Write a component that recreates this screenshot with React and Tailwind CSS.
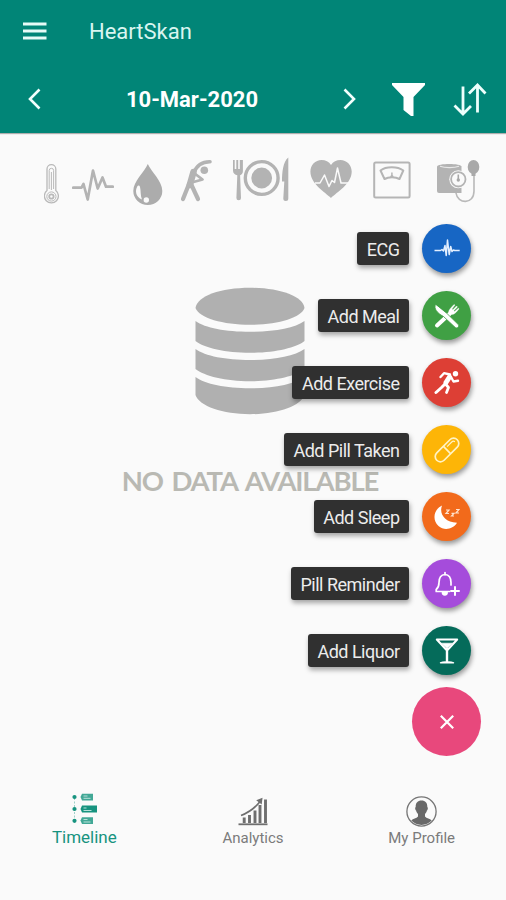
import React, { useState } from 'react';
import clsx from 'clsx';

const ThermometerIcon = () => (
  <svg className="ml-11" width="15" height="50" viewBox="0 0 15 50" fill="none" stroke="#b9b9b9">
    <path d="M3 35.5V14a4.4 4.4 0 0 1 8.8 0v21.5a7 7 0 1 1-8.8 0z" strokeWidth="1.3" />
    <path d="M5.2 34V15.5a2.2 2.2 0 0 1 4.4 0V34" strokeWidth="1" />
    <path d="M7.4 17v18" strokeWidth="1" />
    <circle cx="7.4" cy="41.5" r="4.6" strokeWidth="1" />
    <circle cx="7.4" cy="41.5" r="2.2" strokeWidth="1.8" />
  </svg>
);

const PulseIcon = () => (
  <svg className="ml-[13px]" width="42" height="50" viewBox="0 0 42 50" fill="none" stroke="#b3b3b3" strokeWidth="2.7" strokeLinecap="round" strokeLinejoin="round">
    <path d="M1.2 32.7h8.3l2-3.7 4.2 15.500L21 15.500l4.700 18 4.800-11 3.500 9.200h6.800" />
  </svg>
);

const DropIcon = () => (
  <svg className="ml-[19px]" width="30" height="50" viewBox="0 0 30 50">
    <path d="M14.8 9C18.500 17 29.300 26 29.300 36a14.500 14 0 0 1-29 0C.3 26 11.500 17 14.800 9z" fill="#acacac" />
    <path d="M4.500 31C1.500 36 3 42 9 44.500 7.300 41 8 35.500 7 32c-.5-1.600-1.700-1.900-2.500-1z" fill="#fafafa" />
    <circle cx="13.300" cy="45" r="2.700" fill="#fafafa" />
  </svg>
);

const StretchIcon = () => (
  <svg className="ml-[17px]" width="32" height="50" viewBox="0 0 32 50" fill="none" stroke="#b3b3b3" strokeLinecap="round" strokeLinejoin="round">
    <path d="M30 6.700C22 6.500 16.500 11 13.500 18" strokeWidth="3.600" />
    <path d="M13.500 17L9.800 30" strokeWidth="6.500" />
    <path d="M9 29L3 44" strokeWidth="4.200" />
    <path d="M11.500 30l6.500 14" strokeWidth="4.200" />
    <path d="M14 18l8.500 6.500-9 2.500" strokeWidth="2.800" />
    <circle cx="24.300" cy="15.300" r="3.800" fill="#b3b3b3" stroke="none" />
  </svg>
);

const PlateIcon = () => (
  <svg className="ml-5" width="58" height="50" viewBox="0 0 58 50" fill="#b3b3b3">
    <path d="M1 5h1.700v9h1.600V5h1.900v9h1.600V5h1.900v9V5h1.200v11c0 2.600-1.300 3.600-2.800 4.300l.9 22.700a2.300 2.300 0 0 1-4.600 0l.9-22.700C3 19.600 1 18.500 1 15.500z" />
    <circle cx="29.700" cy="23" r="16.400" fill="none" stroke="#b3b3b3" strokeWidth="3.400" />
    <circle cx="29.700" cy="23" r="10.400" />
    <path d="M56.300 2.500v41a2.500 2.500 0 0 1-5 0l1-17h-2.300c0-9 1-20 6.300-24z" />
  </svg>
);

const HeartRateIcon = () => (
  <svg className="ml-5" width="42" height="50" viewBox="0 0 42 50">
    <path d="M21 43C15 37 .4 29 .4 16.500.4 10 5.400 5 11.500 5c4 0 7.500 1.800 9.500 5 2-3.200 5.500-5 9.500-5 6.100 0 11.200 5 11.200 11.500C41.700 29 27 37 21 43z" fill="#b3b3b3" />
    <path d="M5 28h5l4.500-8 4.500 11.500 3-6 2.500 2 3-14.500 3.500 15H38" fill="none" stroke="#fafafa" strokeWidth="1.500" strokeLinejoin="round" />
  </svg>
);

const ScaleIcon = () => (
  <svg className="ml-[21px]" width="38" height="50" viewBox="0 0 38 50" fill="none" stroke="#b5b5b5">
    <rect x="1.200" y="7.600" width="35.400" height="35" rx="1.500" strokeWidth="2" />
    <path d="M7.500 15.500c5.500-4.300 17-4.300 22.800 0L26.500 24c-4-2.200-11-2.200-15 0z" strokeWidth="2" strokeLinejoin="round" />
    <path d="M18.900 22.500v-5" strokeWidth="1.500" />
    <circle cx="18.900" cy="21.500" r="1.600" fill="#b5b5b5" stroke="none" />
  </svg>
);

const BloodPressureIcon = () => (
  <svg className="ml-[25px]" width="44" height="50" viewBox="0 0 44 50">
    <path d="M1 11.500C1 8 25.500 8 25.500 11.500V38H3a2 2 0 0 1-2-2z" fill="#b3b3b3" />
    <path d="M4 11.300c5 1.700 14 1.700 19 0" fill="none" stroke="#e8e8e8" strokeWidth="1.200" />
    <path d="M20 38c1.500 11 18 12 18-2V19" fill="none" stroke="#b9b9b9" strokeWidth="1.600" />
    <circle cx="22.300" cy="24.300" r="9" fill="#fafafa" />
    <circle cx="22.300" cy="24.300" r="7.200" fill="#fafafa" stroke="#b3b3b3" strokeWidth="1.800" />
    <path d="M22.300 25.500v-6" stroke="#a8a8a8" strokeWidth="1.600" />
    <circle cx="22.300" cy="25" r="1.700" fill="#a8a8a8" />
    <ellipse cx="37.500" cy="12" rx="5.800" ry="7" fill="#a9a9a9" />
    <path d="M35.500 17h4v4h-4z" fill="#a9a9a9" />
  </svg>
);

const DatabaseIcon = () => (
  <svg width="110" height="128" viewBox="0 0 110 128" fill="#b0b0b0">
    <path d="M.5 21C2 9 26 .8 55 .8S108 9 109.500 21C106 31 82 37.800 55 37.800S4 31 .5 21z" />
    <path d="M.5 34C10 41 31 44.800 55 44.800s45-3.800 54.500-10.800v20C101 61 79 65.800 55 65.800S9 61 .5 54z" />
    <path d="M.5 62C10 69 31 73 55 73s45-4 54.500-11v20C101 89 79 94.300 55 94.300S9 89 .5 82z" />
    <path d="M.5 90C10 97 31 101.300 55 101.300s45-4.300 54.500-11.300v18C106 119 82 127.200 55 127.200S4 119 .5 108z" />
  </svg>
);

const EcgIcon = () => (
  <svg width="26" height="26" viewBox="0 0 26 26" fill="none" stroke="#e3efff" strokeWidth="1.500" strokeLinejoin="round">
    <path d="M.5 14.500h6l1.500-1 1.500 1.500L11 9.500l1.200 10L13.500 4l1.700 14.500 1.500-8L18 15.500l1.500-1.500 1.200.5h5" />
  </svg>
);

const MealIcon = () => (
  <svg width="26" height="26" viewBox="0 0 26 26" fill="none" stroke="#fff" strokeLinecap="round">
    <path d="M3 22.500L15.500 11" strokeWidth="4" />
    <path d="M14.500 9.500c0-2.500 2-4.500 5.500-8l1 .5-3 4 .8.800L22.500 3l1 1-3.700 3.700.8.800L24.500 5l.5 1c-3.500 4-5 6-8 5.500z" fill="#fff" strokeWidth=".3" />
    <path d="M1.500 1.500c-2 4 1.500 8.500 8 12l11.800 11c2 1.400 4.300-1 3-2.900L13 10.500z" fill="#fff" stroke="#40a044" strokeWidth=".8" />
  </svg>
);

const RunIcon = () => (
  <svg width="26" height="26" viewBox="0 0 26 26" fill="none" stroke="#fff" strokeLinecap="round" strokeLinejoin="round">
    <circle cx="21.500" cy="3.800" r="2.700" fill="#fff" stroke="none" />
    <path d="M16 4.500l-6-1.300L6.500 7" strokeWidth="2.400" />
    <path d="M15.500 7L12 12.500" strokeWidth="5" />
    <path d="M17 7l2.500 4.500 4.500-.8" strokeWidth="2.400" />
    <path d="M11 14L7.500 17.500 2 22.500" strokeWidth="3" />
    <path d="M11.500 14l3 3.500-2 5" strokeWidth="2.800" />
  </svg>
);

const PillIcon = () => (
  <svg width="28" height="28" viewBox="0 0 28 28" fill="none" stroke="#fff3c4" strokeWidth="1.700">
    <g transform="rotate(-45 14 14)">
      <rect x="-.5" y="8.800" width="29" height="10.400" rx="5.200" />
      <path d="M14 9v10" />
      <path d="M16.500 11.700h6.500a2.500 2.500 0 0 1 2.500 2" strokeWidth="1.200" />
    </g>
  </svg>
);

const SleepIcon = () => (
  <svg width="26" height="26" viewBox="0 0 26 26">
    <path d="M8 1.500C5 9 10 18.500 23 18.800 19 25.500 10 27 4.500 22-2 16-.5 5.500 8 1.500z" fill="#fff" />
    <path d="M12 6h3l-3 3.500h3M17.500 9.300H20L17.500 12H20M22 5.500h3L22 9h3" fill="none" stroke="#ffe3cf" strokeWidth="1.200" />
  </svg>
);

const ReminderIcon = () => (
  <svg width="26" height="26" viewBox="0 0 26 26" fill="none" stroke="#fff" strokeWidth="1.700" strokeLinecap="round" strokeLinejoin="round">
    <path d="M15.500 20.500H2.200v-2c2.300-1.800 2.800-3.500 2.800-7C5 6.500 7.500 3.800 11 3.500c3.500.3 6 3 6 8v2.500" />
    <path d="M11 3.500V1.500" />
    <path d="M8.500 21.500a2.300 2.300 0 0 0 4.600 0z" fill="#fff" />
    <path d="M21 16v8M17 20h8" strokeWidth="2" />
  </svg>
);

const LiquorIcon = () => (
  <svg width="24" height="28" viewBox="0 0 24 28" fill="none" stroke="#fff" strokeWidth="2" strokeLinecap="round" strokeLinejoin="round">
    <path d="M1.800 2.500h20.400L13 12.500h-2z" />
    <path d="M6.500 6.200h11L12.500 11h-1z" fill="#fff" strokeWidth=".6" />
    <path d="M12 12v12" strokeWidth="2.400" />
    <path d="M5.500 25.800c1.500-1.300 11.500-1.300 13 0z" fill="#fff" strokeWidth="1.400" />
  </svg>
);

const TimelineIcon = () => (
  <svg className="mb-[2px]" width="26" height="32" viewBox="0 0 26 32" fill="#17937f">
    <path d="M3.500 5v22" stroke="#9fd2c9" strokeWidth="1" strokeDasharray="2 1.500" />
    <circle cx="3.500" cy="4" r="2.100" />
    <circle cx="3.500" cy="16" r="2.100" />
    <circle cx="3.500" cy="27.800" r="2.100" />
    <path d="M9.500 4L11 .8h11v6.600H11z" fill="#42a896" />
    <path d="M9.500 16l1.500-3.500h15v7H11z" />
    <path d="M9.500 27.500l1.500-3.300h11v6.900H11z" fill="#42a896" />
    <path d="M12.500 3h4M12.500 5.300h7M12.500 15h3M12.500 17.500h8M12.500 26.500h4M12.500 29h7" stroke="#c8e8e2" strokeWidth=".9" />
  </svg>
);

const AnalyticsIcon = () => (
  <svg className="mb-px" width="30" height="29" viewBox="0 0 30 29" fill="none" stroke="#6e6e6e">
    <path d="M.5 27.300h29" strokeWidth="1.800" />
    <path d="M6.200 26v-5.500M11.500 26v-8M17 26V13.500M22 26V8M27.500 26V2.500" strokeWidth="2.900" />
    <path d="M3 18.500C11 15.500 17.500 10.500 22.500 4" strokeWidth="1.700" />
    <path d="M24.500.8l-.8 6.700-5.500-4.200z" fill="#6e6e6e" stroke="none" />
  </svg>
);

const ProfileIcon = () => (
  <svg width="31" height="31" viewBox="0 0 31 31">
    <circle cx="15.500" cy="15.500" r="14.600" fill="none" stroke="#757575" strokeWidth="1.300" />
    <path d="M15.500 4.500c4 0 6 2.700 5.800 6.500.9.300.6 3-.4 3.500-.4 1.700-1 2.700-1.900 3.500v2.500c1.500 2 5 1.800 6.700 4A14 14 0 0 1 5.300 24.500c1.700-2.200 5.200-2 6.700-4V18c-.9-.8-1.500-1.800-1.900-3.500-1-.5-1.300-3.200-.4-3.500C9.500 7.200 11.500 4.500 15.500 4.500z" fill="#686868" />
  </svg>
);

const actions = [
  { label: 'ECG', color: 'bg-[#1766c4]', icon: EcgIcon },
  { label: 'Add Meal', color: 'bg-[#40a044]', icon: MealIcon },
  { label: 'Add Exercise', color: 'bg-[#dd3f35]', icon: RunIcon },
  { label: 'Add Pill Taken', color: 'bg-[#fdb507]', icon: PillIcon },
  { label: 'Add Sleep', color: 'bg-[#f26a1b]', icon: SleepIcon },
  { label: 'Pill Reminder', color: 'bg-[#a54cdb]', icon: ReminderIcon },
  { label: 'Add Liquor', color: 'bg-[#056b5a]', icon: LiquorIcon },
];

const tabs = [
  { id: 'timeline', label: 'Timeline', icon: TimelineIcon },
  { id: 'analytics', label: 'Analytics', icon: AnalyticsIcon },
  { id: 'profile', label: 'My Profile', icon: ProfileIcon },
];

const Header = () => (
  <header className="h-[133px] shrink-0 bg-[#018577] text-white shadow-[0_1px_1px_rgba(0,0,0,0.3)]">
    <div className="flex h-[62px] items-center pl-[23px]">
      <button aria-label="Menu">
        <svg width="24" height="18" viewBox="0 0 24 18" stroke="#e6fbf7" strokeWidth="2.800">
          <path d="M0 2h23.500M0 9h23.500M0 16h23.500" />
        </svg>
      </button>
      <h1 className="ml-[42px] text-[22px] text-[#d9f5f0]">HeartSkan</h1>
    </div>
    <div className="flex h-[74px] items-center pl-7">
      <button aria-label="Previous day">
        <svg width="13" height="22" viewBox="0 0 13 22" fill="none" stroke="#f2fffd" strokeWidth="2.600">
          <path d="M11.500 1.500L2 11l9.500 9.500" />
        </svg>
      </button>
      <span className="w-[302px] text-center text-[22px] font-bold">10-Mar-2020</span>
      <button aria-label="Next day">
        <svg width="13" height="22" viewBox="0 0 13 22" fill="none" stroke="#f2fffd" strokeWidth="2.600">
          <path d="M1.500 1.500L11 11l-9.500 9.500" />
        </svg>
      </button>
      <button className="ml-9" aria-label="Filter">
        <svg width="33" height="33" viewBox="0 0 33 33" fill="#fff">
          <path d="M0 0h33v2L21.500 14v19h-2.500L11.500 27V14L0 2z" />
        </svg>
      </button>
      <button className="ml-[28px]" aria-label="Sort">
        <svg width="34" height="33" viewBox="0 0 34 33" fill="none" stroke="#eefffc" strokeWidth="2.800">
          <path d="M10 3.500V31M1.500 22.500L10 31l8-8" />
          <path d="M24.500 29.500V2M16 10.500L24.500 2l8 8.500" />
        </svg>
      </button>
    </div>
  </header>
);

const App = () => {
  const [activeTab, setActiveTab] = useState('timeline');
  const [menuOpen, setMenuOpen] = useState(true);

  return (
    <div className="relative flex h-[900px] w-full flex-col overflow-hidden bg-[#fafafa] font-[Roboto,sans-serif]">
      <Header />

      {/* Record type filters */}
      <div className="mt-[22px] flex h-[50px] shrink-0">
        <ThermometerIcon />
        <PulseIcon />
        <DropIcon />
        <StretchIcon />
        <PlateIcon />
        <HeartRateIcon />
        <ScaleIcon />
        <BloodPressureIcon />
      </div>

      {/* Empty state */}
      <div className="mt-[82px] flex flex-1 flex-col items-center pr-[6px]">
        <DatabaseIcon />
        <p className="mt-[45px] whitespace-nowrap font-[Lato,sans-serif] text-[27.500px] leading-[42px] font-bold tracking-[-1.15px] text-[#b9b9b3] [word-spacing:3px]">
          NO DATA AVAILABLE
        </p>
      </div>

      {/* Floating action menu */}
      <div className="absolute top-[224px] right-[25px] flex flex-col items-end">
        {menuOpen && (
          <div className="mr-[10px] mb-[12px] flex flex-col gap-[18px]">
            {actions.map(({ label, color, icon: Icon }) => (
              <button key={label} className="flex h-[49px] items-center justify-end">
                <span className="mr-[13px] flex h-[33px] items-center rounded-[3px] bg-[#303030] px-[9.500px] pt-[2px] text-[18px] tracking-[-0.5px] whitespace-nowrap text-[#ececec] shadow-[1px_3px_5px_rgba(0,0,0,0.35)]">
                  {label}
                </span>
                <span className={clsx('flex size-[49px] items-center justify-center rounded-full shadow-[1px_3px_5px_rgba(0,0,0,0.4)]', color)}>
                  <Icon />
                </span>
              </button>
            ))}
          </div>
        )}
        <button
          onClick={() => setMenuOpen(!menuOpen)}
          className="flex size-[69px] items-center justify-center rounded-full bg-[#e8487c]"
          aria-label="Toggle actions"
        >
          <svg width="14" height="14" viewBox="0 0 14 14" stroke="#fff" strokeWidth="2.200">
            <path d="M.8.8l12.400 12.400M13.200.8L.8 13.200" />
          </svg>
        </button>
      </div>

      <nav className="grid h-[120px] shrink-0 grid-cols-3">
        {tabs.map(({ id, label, icon: Icon }) => (
          <button key={id} onClick={() => setActiveTab(id)} className="flex flex-col items-center pt-[13px]">
            <span className="flex h-[34px] items-end justify-center">
              <Icon />
            </span>
            <span
              className={clsx(
                'leading-[20px]',
                activeTab === id ? 'text-[17px] text-[#17937f]' : 'mt-px text-[15px] text-[#7b7b7b]'
              )}
            >
              {label}
            </span>
          </button>
        ))}
      </nav>
    </div>
  );
};

export default App;
